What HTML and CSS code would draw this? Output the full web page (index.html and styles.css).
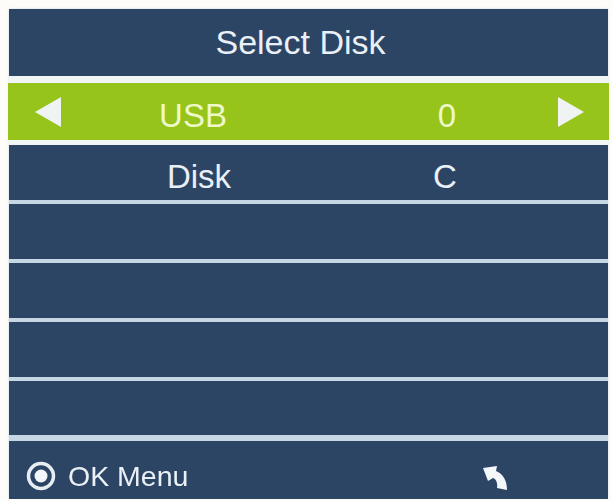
FILE: index.html
```html
<!DOCTYPE html>
<html lang="en">
<head>
    <meta charset="UTF-8">
    <meta name="viewport" content="width=device-width, initial-scale=1.0">
    <title>Select Disk</title>
    <link rel="stylesheet" href="styles.css">
</head>
<body>

<div class="menu">
    <div class="title">Select Disk</div>

    <div class="row row-active">
        <svg class="arrow" viewBox="0 0 26 30"><polygon points="0,15 26,0 26,30"/></svg>
        <span class="label">USB</span>
        <span class="value">0</span>
        <svg class="arrow arrow-right" viewBox="0 0 26 30"><polygon points="26,15 0,0 0,30"/></svg>
    </div>

    <div class="row row-disk">
        <span class="label">Disk</span>
        <span class="value">C</span>
    </div>

    <div class="row row-empty"></div>
    <div class="row row-empty"></div>
    <div class="row row-empty"></div>
    <div class="row row-empty row-last"></div>

    <div class="footer">
        <svg class="ok-icon" viewBox="0 0 30 30">
            <circle cx="15" cy="15" r="12.5" fill="none" stroke="#e6edf3" stroke-width="3.5"/>
            <circle cx="15" cy="15" r="6.5" fill="#f4f7fa"/>
        </svg>
        <span class="ok-text">OK Menu</span>
        <svg class="back-icon" viewBox="0 0 24 24">
            <path d="M0 2 L14 0 L13 5 C20 8 24 14 24 24 L14 22 C15 17 13 13 10 12 L5 15 Z" fill="#f4f7fa"/>
        </svg>
    </div>
</div>

</body>
</html>
```

FILE: styles.css
```css
body {
    margin: 0;
    background: #fdfcf9;
    font-family: 'Liberation Sans', Arial, sans-serif;
    color: #eaf0f5;
}
.menu {
    width: 599px;
    margin: 9px 0 0 9px;
    display: flex;
    flex-direction: column;
    background: #c6d6e5;
    box-shadow: 0 0 2px #c6d6e5;
    filter: blur(0.6px);
}
.title {
    height: 67px;
    line-height: 66px;
    padding-right: 16px;
    background: #2c4565;
    text-align: center;
    font-size: 34px;
    border-bottom: 7px solid #f1f5f6;
}
.row {
    display: flex;
    align-items: center;
    background: #2c4565;
    font-size: 33px;
    padding-left: 26px;
}
.row-active {
    height: 57px;
    margin: 0 -1px;
    padding-left: 27px;
    background: #96c41a;
    color: #eef8c8;
    border-bottom: 5px solid #f1f5f6;
}
.row-disk {
    height: 55px;
    padding-left: 52px;
    margin-bottom: 4px;
}
.row-empty {
    height: 55px;
    margin-bottom: 4px;
}
.row-last {
    height: 54px;
}
.arrow {
    width: 26px;
    height: 30px;
    fill: #eff3f2;
    flex: none;
}
.arrow-right {
    margin-left: 41px;
}
.label {
    width: 264px;
    padding-top: 8px;
    text-align: center;
}
.row-disk .label {
    padding-left: 12px;
    box-sizing: border-box;
}
.value {
    width: 140px;
    margin-left: 52px;
    padding-top: 8px;
    text-align: center;
}
.row-disk .value {
    padding-right: 4px;
    box-sizing: border-box;
}
.footer {
    height: 46px;
    display: flex;
    align-items: center;
    padding: 12px 0 0 17px;
    background: #2c4565;
    border-top: 2px solid #c6d6e5;
}
.ok-icon {
    width: 30px;
    height: 30px;
    flex: none;
}
.ok-text {
    margin-left: 12px;
    width: 415px;
    font-size: 28.5px;
}
.back-icon {
    width: 24px;
    height: 24px;
    flex: none;
    margin-top: 4px;
}
```
